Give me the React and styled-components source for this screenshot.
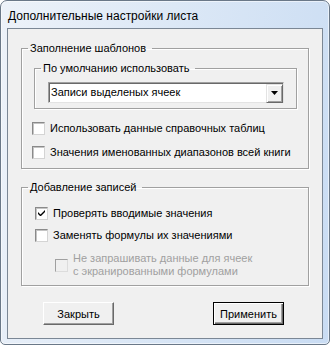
import React, { useState } from "react";
import styled, { createGlobalStyle } from "styled-components";

const GlobalStyle = createGlobalStyle`
    * {
        box-sizing: border-box;
    }
    body {
        margin: 0;
        background: #fff;
        font-family: "Liberation Sans", Arial, sans-serif;
        font-size: 11px;
        color: #000;
    }
`;

function App() {
    const [checkRefs, setCheckRefs] = useState(false);
    const [checkNames, setCheckNames] = useState(false);
    const [validate, setValidate] = useState(true);
    const [replace, setReplace] = useState(false);

    return (
        <>
            <GlobalStyle />
            <Window>
                <TitleBar>Дополнительные настройки листа</TitleBar>
                <Client>
                    <Group>
                        <Legend>Заполнение шаблонов</Legend>
                        <InnerGroup>
                            <Legend>По умолчанию использовать</Legend>
                            <Select>
                                <SelectText>Записи выделеных ячеек</SelectText>
                                <DropButton>
                                    <svg width="7" height="4" viewBox="0 0 7 4">
                                        <path d="M0 0h7L3.5 4z" fill="#000" />
                                    </svg>
                                </DropButton>
                            </Select>
                        </InnerGroup>
                        <Rows $left={10} $top={11} $gap={8} $bottom={8}>
                            <CheckRow
                                label="Использовать данные справочных таблиц"
                                checked={checkRefs}
                                onToggle={() => setCheckRefs(!checkRefs)}
                            />
                            <CheckRow
                                label="Значения именованных диапазонов всей книги"
                                checked={checkNames}
                                onToggle={() => setCheckNames(!checkNames)}
                            />
                        </Rows>
                    </Group>
                    <Group $top={12}>
                        <Legend>Добавление записей</Legend>
                        <Rows $left={13} $top={11} $gap={6} $bottom={7}>
                            <CheckRow
                                label="Проверять вводимые значения"
                                checked={validate}
                                onToggle={() => setValidate(!validate)}
                            />
                            <CheckRow
                                label="Заменять формулы их значениями"
                                checked={replace}
                                onToggle={() => setReplace(!replace)}
                            />
                            <CheckRow
                                $indent
                                disabled
                                label={
                                    <>
                                        Не запрашивать данные для ячеек
                                        <br />с экранированными формулами
                                    </>
                                }
                            />
                        </Rows>
                    </Group>
                    <ButtonRow>
                        <Button>Закрыть</Button>
                        <Button $default>Применить</Button>
                    </ButtonRow>
                </Client>
            </Window>
        </>
    );
}

function CheckRow({ label, checked, disabled, onToggle, $indent }) {
    return (
        <Row $indent={$indent} $disabled={disabled} onClick={disabled ? undefined : onToggle}>
            <Box $disabled={disabled}>
                {checked && (
                    <svg width="7" height="7" viewBox="0 0 7 7">
                        <path d="M0 2v2l2 2h1l4-4V0L2.5 4.5z" fill="#000" />
                    </svg>
                )}
            </Box>
            <Label>{label}</Label>
        </Row>
    );
}

export default App;

const Window = styled.div`
    width: 330px;
    height: 345px;
    display: flex;
    flex-direction: column;
    border: 1px solid #6a7888;
    border-radius: 7px 7px 5px 5px;
    padding: 0 6px 5px 6px;
    background: linear-gradient(100deg, #edf2f9 0%, #dce8f6 45%, #c9dcf3 100%);
    box-shadow: inset 0 0 0 1px rgba(255, 255, 255, 0.55);
`;

const TitleBar = styled.div`
    height: 27px;
    display: flex;
    align-items: center;
    padding: 2px 0 0 1px;
    font-size: 12px;
    color: #000;
    white-space: nowrap;
`;

const Client = styled.div`
    flex: 1;
    border: 1px solid #7b8795;
    background: #f0f0f0;
    padding: 13px 13px 0 13px;
    display: flex;
    flex-direction: column;
`;

const Group = styled.fieldset`
    margin: ${(p) => p.$top || 0}px 0 0 0;
    padding: 0;
    min-width: 0;
    border: 1px solid #a0a0a0;
    box-shadow: inset 1px 1px 0 #fff, 1px 1px 0 #fff;
`;

const InnerGroup = styled(Group)`
    margin: 7px 11px 0 12px;
    padding: 7px 0 5px 0;
`;

const Legend = styled.legend`
    margin-left: 6px;
    padding: 0 6px 0 2px;
    font-size: 11px;
    line-height: 13px;
    color: #000;
`;

const Select = styled.div`
    height: 21px;
    margin: 0 12px 0 13px;
    display: flex;
    align-items: center;
    background: #fff;
    border: 1px solid;
    border-color: #a0a0a0 #e3e3e3 #e3e3e3 #a0a0a0;
    box-shadow: inset 1px 1px 0 #696969;
    padding: 1px 0 1px 2px;
`;

const SelectText = styled.span`
    flex: 1;
    line-height: 13px;
`;

const DropButton = styled.span`
    width: 17px;
    height: 19px;
    margin-top: 1px;
    display: flex;
    align-items: center;
    justify-content: center;
    background: #f0f0f0;
    border: 1px solid;
    border-color: #e3e3e3 #696969 #696969 #e3e3e3;
    box-shadow: inset 1px 1px 0 #fff, inset -1px -1px 0 #a0a0a0;
`;

const Rows = styled.div`
    display: flex;
    flex-direction: column;
    gap: ${(p) => p.$gap}px;
    padding: ${(p) => p.$top}px 0 ${(p) => p.$bottom}px ${(p) => p.$left}px;
`;

const Row = styled.div`
    display: flex;
    align-items: center;
    gap: 5px;
    min-height: 16px;
    margin-top: ${(p) => (p.$indent ? 3 : 0)}px;
    padding-left: ${(p) => (p.$indent ? 20 : 0)}px;
    color: ${(p) => (p.$disabled ? "#a0a0a0" : "#000")};
    cursor: default;
    user-select: none;
`;

const Box = styled.span`
    flex: none;
    width: 13px;
    height: 13px;
    display: flex;
    align-items: center;
    justify-content: center;
    background: ${(p) => (p.$disabled ? "#f0f0f0" : "#fff")};
    border: 1px solid;
    border-color: ${(p) =>
        p.$disabled ? "#a0a0a0 #dcdcdc #dcdcdc #a0a0a0" : "#8a8a8a #d4d4d4 #d4d4d4 #8a8a8a"};
    box-shadow: ${(p) => (p.$disabled ? "none" : "inset 1px 1px 0 #c4c4c4")};
`;

const Label = styled.span`
    line-height: 13px;
    white-space: nowrap;
`;

const ButtonRow = styled.div`
    display: flex;
    justify-content: space-between;
    margin-top: 16px;
    padding: 0 25px 0 22px;
`;

const Button = styled.button`
    width: 71px;
    height: 23px;
    padding: 0;
    font-family: "Liberation Sans", Arial, sans-serif;
    font-size: 11px;
    color: #000;
    background: #f0f0f0;
    border: 1px solid;
    border-color: ${(p) => (p.$default ? "#000" : "#fff #696969 #696969 #fff")};
    box-shadow: ${(p) =>
        p.$default
            ? "inset 1px 1px 0 #fff, inset -1px -1px 0 #696969, inset -2px -2px 0 #a0a0a0"
            : "inset -1px -1px 0 #a0a0a0"};
    border-radius: 0;
    outline: none;
`;
